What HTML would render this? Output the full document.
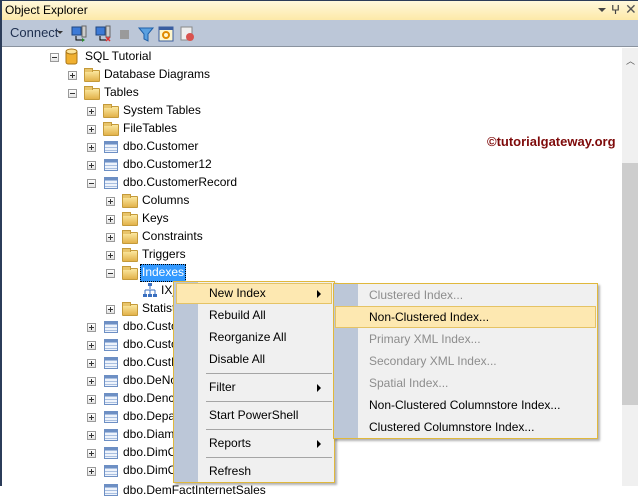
<!DOCTYPE html>
<html><head><meta charset="utf-8"><style>
*{margin:0;padding:0;box-sizing:border-box}
body{width:638px;height:486px;overflow:hidden;background:#fff;font-family:"Liberation Sans",sans-serif;font-size:12px;color:#000;position:relative}
.a{position:absolute;white-space:nowrap}
.title{left:0;top:0;width:638px;height:20px;background:linear-gradient(#fff8dc,#fde9a8);border-top:1px solid #2b3c59}
.tb{left:0;top:20px;width:638px;height:27px;background:#bcc7d8;border-bottom:1px solid #8a939f}
.lb{position:absolute;left:0;top:0;width:2px;height:486px;background:#2b3c59}
.ex{position:absolute;width:9px;height:9px;border:1px solid #9a9a9a;background:linear-gradient(#fff,#e4e4e4)}
.ex::before{content:"";position:absolute;left:1px;top:3px;width:5px;height:1px;background:#333}
.ex.p::after{content:"";position:absolute;left:3px;top:1px;width:1px;height:5px;background:#333}
.fo{position:absolute;width:16px;height:12px;background:linear-gradient(#fbe8a0,#e2b24a);border:1px solid #c49a3a;border-radius:1px}
.fo::before{content:"";position:absolute;left:-1px;top:-3px;width:7px;height:3px;background:#e8c46a;border:1px solid #c49a3a;border-bottom:none}
.tbl{position:absolute;width:14px;height:12px;border:1px solid #6d8fc4;background:repeating-linear-gradient(#eef3fb 0 2px,#a9bfe0 2px 3px)}
.tbl::before{content:"";position:absolute;left:0;top:0;width:12px;height:2px;background:#6d8fc4}
.t{position:absolute;line-height:16px}
.menu{position:absolute;background:#f0f0f0;border:1px solid #e0b83c;box-shadow:2px 2px 2px rgba(0,0,0,.3)}
.gut{position:absolute;left:0;top:0;bottom:0;width:24px;background:#bcc7d8}
.mi{position:absolute;line-height:16px}
.hl{position:absolute;background:#fde8b1;border:1px solid #e5c365}
.sep{position:absolute;height:1px;background:#a5a5a5}
.arr{position:absolute;width:0;height:0;border-top:4px solid transparent;border-bottom:4px solid transparent;border-left:4px solid #000}
.dis{color:#8d8d8d}
</style></head><body>
<div class="a title"></div>
<div class="a" style="left:5px;top:2px;line-height:16px">Object Explorer</div>
<div class="a" style="left:598px;top:8px;border-left:4px solid transparent;border-right:4px solid transparent;border-top:4px solid #444"></div>
<div class="a" style="left:611px;top:3px;font-size:12px;color:#444">ⵖ</div>
<div class="a" style="left:625px;top:1px;font-size:14px;color:#555">✕</div>
<div class="a tb"></div>
<div class="a" style="left:10px;top:25px;line-height:16px;color:#1e2f4f;font-size:13px">Connect</div>
<div class="a" style="left:57px;top:31px;border-left:3px solid transparent;border-right:3px solid transparent;border-top:3px solid #333"></div>
<svg class="a" style="left:70px;top:24px" width="130" height="20">
<rect x="2" y="3" width="9" height="8" fill="#3d7ad6" stroke="#20467f"/><rect x="12" y="2" width="4" height="11" fill="#ccc" stroke="#666"/><path d="M6 12v4h8" stroke="#000" fill="none"/><path d="M12 14l3 2-3 2" fill="#2a8a2a"/>
<rect x="26" y="3" width="9" height="8" fill="#3d7ad6" stroke="#20467f"/><rect x="36" y="2" width="4" height="11" fill="#ccc" stroke="#666"/><path d="M30 12v4h6" stroke="#000" fill="none"/><path d="M36 13l4 4M40 13l-4 4" stroke="#d33" stroke-width="1.5"/>
<rect x="50" y="6" width="9" height="9" fill="#9a9a9a"/>
<path d="M69 4h14l-5 6v7l-4-2v-5z" fill="#5aa0e0" stroke="#1e5fa8"/>
<rect x="89" y="3" width="14" height="14" fill="#fff6cc" stroke="#3a5da0"/><rect x="89" y="3" width="14" height="3" fill="#3a5da0"/><circle cx="96" cy="11" r="3" fill="none" stroke="#e08a00" stroke-width="2"/>
<rect x="111" y="3" width="11" height="13" fill="#eee" stroke="#888"/><circle cx="120" cy="13" r="4" fill="#d9534f"/>
</svg>
<div class="lb"></div>
<div class="a" style="left:622px;top:48px;width:16px;height:438px;background:#f0f0f0"></div>
<div class="a" style="left:626px;top:54px;font-size:9px;color:#555">︿</div>
<div class="a" style="left:622px;top:163px;width:16px;height:242px;background:#cdcdcd"></div>
<div class="a" style="left:487px;top:134px;font-weight:bold;font-size:13px;color:#7e0a0a">©tutorialgateway.org</div>

<div class="ex" style="left:50px;top:53px"></div>
<svg class="a" style="left:65px;top:48px" width="14" height="18"><rect x="1" y="3" width="11" height="13" rx="2" fill="#f0b030" stroke="#a87415"/><ellipse cx="6.5" cy="3.5" rx="5.5" ry="2.5" fill="#fbe39a" stroke="#a87415"/></svg>
<div class="t" style="left:85px;top:48px">SQL Tutorial</div>
<div class="ex p" style="left:68px;top:71px"></div><div class="fo" style="left:84px;top:70px"></div><div class="t" style="left:104px;top:66px">Database Diagrams</div>
<div class="ex" style="left:68px;top:89px"></div><div class="fo" style="left:84px;top:88px"></div><div class="t" style="left:104px;top:84px">Tables</div>
<div class="ex p" style="left:87px;top:107px"></div><div class="fo" style="left:103px;top:106px"></div><div class="t" style="left:123px;top:102px">System Tables</div>
<div class="ex p" style="left:87px;top:125px"></div><div class="fo" style="left:103px;top:124px"></div><div class="t" style="left:123px;top:120px">FileTables</div>
<div class="ex p" style="left:87px;top:143px"></div><div class="tbl" style="left:104px;top:141px"></div><div class="t" style="left:123px;top:138px">dbo.Customer</div>
<div class="ex p" style="left:87px;top:161px"></div><div class="tbl" style="left:104px;top:159px"></div><div class="t" style="left:123px;top:156px">dbo.Customer12</div>
<div class="ex" style="left:87px;top:179px"></div><div class="tbl" style="left:104px;top:177px"></div><div class="t" style="left:123px;top:174px">dbo.CustomerRecord</div>
<div class="ex p" style="left:106px;top:197px"></div><div class="fo" style="left:122px;top:196px"></div><div class="t" style="left:142px;top:192px">Columns</div>
<div class="ex p" style="left:106px;top:215px"></div><div class="fo" style="left:122px;top:214px"></div><div class="t" style="left:142px;top:210px">Keys</div>
<div class="ex p" style="left:106px;top:233px"></div><div class="fo" style="left:122px;top:232px"></div><div class="t" style="left:142px;top:228px">Constraints</div>
<div class="ex p" style="left:106px;top:251px"></div><div class="fo" style="left:122px;top:250px"></div><div class="t" style="left:142px;top:246px">Triggers</div>
<div class="ex" style="left:106px;top:269px"></div><div class="fo" style="left:122px;top:268px"></div>
<div class="t" style="left:140px;top:264px;height:18px;line-height:15px;padding:0 1px;background:#3399ff;color:#fff;border:1px dotted #000">Indexes</div>
<svg class="a" style="left:142px;top:283px" width="16" height="16"><path d="M8 2v4M3 7h10M3 7v4M8 7v4M13 7v4" stroke="#3a6fc0" fill="none"/><rect x="6" y="0" width="4" height="3" fill="#3a6fc0"/><rect x="1" y="11" width="4" height="3" fill="#3a6fc0"/><rect x="6" y="11" width="4" height="3" fill="#3a6fc0"/><rect x="11" y="11" width="4" height="3" fill="#3a6fc0"/></svg>
<div class="t" style="left:161px;top:282px">IX_</div>
<div class="ex p" style="left:106px;top:305px"></div><div class="fo" style="left:122px;top:304px"></div><div class="t" style="left:142px;top:300px">Statistics</div>
<div class="ex p" style="left:87px;top:323px"></div><div class="tbl" style="left:104px;top:321px"></div><div class="t" style="left:123px;top:318px">dbo.Customers</div>
<div class="ex p" style="left:87px;top:341px"></div><div class="tbl" style="left:104px;top:339px"></div><div class="t" style="left:123px;top:336px">dbo.Customers</div>
<div class="ex p" style="left:87px;top:359px"></div><div class="tbl" style="left:104px;top:357px"></div><div class="t" style="left:123px;top:354px">dbo.CustInfo</div>
<div class="ex p" style="left:87px;top:377px"></div><div class="tbl" style="left:104px;top:375px"></div><div class="t" style="left:123px;top:372px">dbo.DeNorm</div>
<div class="ex p" style="left:87px;top:395px"></div><div class="tbl" style="left:104px;top:393px"></div><div class="t" style="left:123px;top:390px">dbo.Dencity</div>
<div class="ex p" style="left:87px;top:413px"></div><div class="tbl" style="left:104px;top:411px"></div><div class="t" style="left:123px;top:408px">dbo.Department</div>
<div class="ex p" style="left:87px;top:431px"></div><div class="tbl" style="left:104px;top:429px"></div><div class="t" style="left:123px;top:426px">dbo.Diamond</div>
<div class="ex p" style="left:87px;top:449px"></div><div class="tbl" style="left:104px;top:447px"></div><div class="t" style="left:123px;top:444px">dbo.DimCust</div>
<div class="ex p" style="left:87px;top:467px"></div><div class="tbl" style="left:104px;top:465px"></div><div class="t" style="left:123px;top:462px">dbo.DimCust</div>
<div class="tbl" style="left:104px;top:484px"></div><div class="t" style="left:123px;top:482px">dbo.DemFactInternetSales</div>

<div class="menu" style="left:173px;top:281px;width:162px;height:202px">
<div class="gut"></div>
<div class="hl" style="left:2px;top:1px;width:156px;height:21px"></div>
<div class="mi" style="left:35px;top:3px">New Index</div><div class="arr" style="left:143px;top:8px"></div>
<div class="mi" style="left:35px;top:25px">Rebuild All</div>
<div class="mi" style="left:35px;top:47px">Reorganize All</div>
<div class="mi" style="left:35px;top:69px">Disable All</div>
<div class="sep" style="left:32px;top:91px;width:126px"></div>
<div class="mi" style="left:35px;top:97px">Filter</div><div class="arr" style="left:143px;top:102px"></div>
<div class="sep" style="left:32px;top:119px;width:126px"></div>
<div class="mi" style="left:35px;top:125px">Start PowerShell</div>
<div class="sep" style="left:32px;top:147px;width:126px"></div>
<div class="mi" style="left:35px;top:153px">Reports</div><div class="arr" style="left:143px;top:158px"></div>
<div class="sep" style="left:32px;top:175px;width:126px"></div>
<div class="mi" style="left:35px;top:181px">Refresh</div>
</div>
<div class="menu" style="left:333px;top:283px;width:265px;height:156px">
<div class="gut"></div>
<div class="hl" style="left:1px;top:22px;width:261px;height:22px"></div>
<div class="mi dis" style="left:35px;top:3px">Clustered Index...</div>
<div class="mi" style="left:35px;top:25px">Non-Clustered Index...</div>
<div class="mi dis" style="left:35px;top:47px">Primary XML Index...</div>
<div class="mi dis" style="left:35px;top:69px">Secondary XML Index...</div>
<div class="mi dis" style="left:35px;top:91px">Spatial Index...</div>
<div class="mi" style="left:35px;top:113px">Non-Clustered Columnstore Index...</div>
<div class="mi" style="left:35px;top:135px">Clustered Columnstore Index...</div>
</div>
</body></html>
